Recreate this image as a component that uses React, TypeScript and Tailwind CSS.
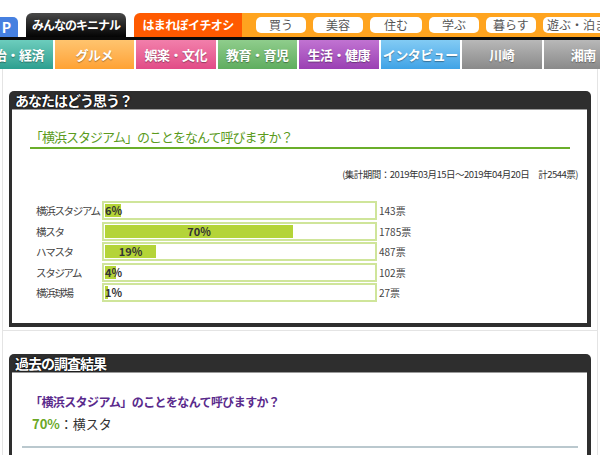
import React from "react";

const pills = [
  { label: "買う", w: "w-[50px]" },
  { label: "美容", w: "w-[50px]" },
  { label: "住む", w: "w-[52px]" },
  { label: "学ぶ", w: "w-[50px]" },
  { label: "暮らす", w: "w-[50px]" },
  { label: "遊ぶ・泊まる", w: "w-[80px]" },
];

const categories = [
  { label: "政治・経済", cls: "from-[#6ccdbd] to-[#2c9f90]" },
  { label: "グルメ", cls: "from-[#ffc46e] to-[#ffa232]" },
  { label: "娯楽・文化", cls: "from-[#f27fab] to-[#e14b87]" },
  { label: "教育・育児", cls: "from-[#8fcd8c] to-[#5fad5f]" },
  { label: "生活・健康", cls: "from-[#c173d2] to-[#9a3fb3]" },
  { label: "インタビュー", cls: "from-[#82cbf4] to-[#3fa3e6]" },
  { label: "川崎", cls: "from-[#b8b8b8] to-[#8a8a8a]" },
  { label: "湘南", cls: "from-[#b8b8b8] to-[#8a8a8a]" },
];

type PollRow = { label: string; pct: number; votes: number };

const rows: PollRow[] = [
  { label: "横浜スタジアム", pct: 6, votes: 143 },
  { label: "横スタ", pct: 70, votes: 1785 },
  { label: "ハマスタ", pct: 19, votes: 487 },
  { label: "スタジアム", pct: 4, votes: 102 },
  { label: "横浜球場", pct: 1, votes: 27 },
];

function Panel({
  title,
  children,
}: {
  title: string;
  children: React.ReactNode;
}) {
  return (
    <div className="ml-[6px] mr-[6px]">
      <div className="h-[18px] bg-[#2e2e2e] rounded-t-[5px] pl-[6px] flex items-center">
        <span className="text-white font-bold text-[14px] leading-[18px] tracking-[-1px] [text-shadow:0_0_2px_#000,0_0_1px_#000]">
          {title}
        </span>
      </div>
      <div className="border-l-[3px] border-r-[4px] border-b-[4px] border-[#2e2e2e] bg-white">
        <div className="border-t border-[#9a9a9a]">{children}</div>
      </div>
    </div>
  );
}

export default function App() {
  return (
    <div className="w-[600px] h-[455px] overflow-hidden bg-white font-['Noto_Sans_CJK_JP',sans-serif] text-[#333]">
      {/* tabs */}
      <div className="flex items-end h-[37px]">
        <div className="ml-[-40px] w-[58px] h-[20px] bg-[#4680e0] rounded-tr-[5px] flex items-center justify-end pr-[3px] text-white font-bold text-[14px] leading-none tracking-[4px]">
          TOP
        </div>
        <div className="ml-[8px] w-[100px] h-[24px] bg-linear-to-b from-[#4a4a4a] to-[#050505] rounded-t-[6px] flex items-center justify-center text-white font-bold text-[12px] tracking-[-1px]">
          みんなのキニナル
        </div>
        <div className="ml-[8px] w-[108px] h-[24px] bg-[#ff5a00] rounded-tl-[6px] flex items-center justify-center text-white font-bold text-[12px] tracking-[-0.6px]">
          はまれぽイチオシ
        </div>
        <div className="flex-1 h-[24px] bg-[#ffa41f] flex items-center gap-[7px] pl-[14px] overflow-hidden">
          {pills.map((p) => (
            <div
              key={p.label}
              className={`${p.w} shrink-0 h-[16px] bg-white rounded-[5px] flex items-center justify-center text-[#555] text-[12px] leading-none whitespace-nowrap`}
            >
              {p.label}
            </div>
          ))}
        </div>
      </div>
      <div className="h-[3px] bg-[#0a0a0a]" />

      {/* categories */}
      <div className="flex gap-[2px] ml-[-27px] h-[29px]">
        {categories.map((c) => (
          <div
            key={c.label}
            className={`w-[79.5px] shrink-0 bg-linear-to-b ${c.cls} flex items-center justify-center text-white font-bold text-[13px] tracking-[-0.5px] whitespace-nowrap [text-shadow:0_1px_1px_rgba(0,0,0,0.35)]`}
          >
            {c.label}
          </div>
        ))}
      </div>

      <div className="ml-[2px] w-[596px] border-x border-[#e4e4e4] pt-[22px] h-[400px]">
        <Panel title="あなたはどう思う？">
          <div className="pt-[19px] pb-[21px]">
            <div className="ml-[18px] mr-[17px] border-b-2 border-[#6aae2a] pb-[2px]">
              <p className="text-[#5b9b1d] text-[13px] leading-[16px] tracking-[-1px]">
                「横浜スタジアム」のことをなんて呼びますか？
              </p>
            </div>
            <p className="mt-[18px] pr-[9px] text-right text-[9.5px] leading-[14px] tracking-[-0.5px] text-[#333]">
              (集計期間：2019年03月15日～2019年04月20日　計2544票)
            </p>
            <div className="mt-[20px] flex flex-col gap-[1.5px] pl-[24px]">
              {rows.map((r) => (
                <div key={r.label} className="flex items-center h-[19px]">
                  <div className="w-[66px] text-[10.5px] leading-[19px] tracking-[-1.3px] whitespace-nowrap text-[#444]">
                    {r.label}
                  </div>
                  <div className="w-[275px] h-[19px] border-2 border-[#cfe59a] p-[1px]">
                    <div
                      className="h-[13px] bg-[#b4d438] text-center whitespace-nowrap text-[11px] leading-[13px] font-bold text-[#333]"
                      style={{ width: `${r.pct}%` }}
                    >
                      {r.pct}%
                    </div>
                  </div>
                  <div className="ml-[2px] text-[10px] leading-[19px] text-[#444]">
                    {r.votes}票
                  </div>
                </div>
              ))}
            </div>
          </div>
        </Panel>

        <div className="mt-[3px] border-t border-[#e4e4e4]" />

        <div className="mt-[23px]">
          <Panel title="過去の調査結果">
            <div className="pt-[21px] h-[100px]">
              <p className="pl-[18px] text-[#5a2a8c] font-bold text-[12px] leading-[16px] tracking-[-0.6px]">
                「横浜スタジアム」のことをなんて呼びますか？
              </p>
              <p className="mt-[6px] pl-[20px] text-[13px] leading-[16px]">
                <span className="text-[#6aa826] font-bold">70%</span>
                <span className="text-[#333]">：横スタ</span>
              </p>
              <div className="mt-[14px] ml-[10px] mr-[9px] border-t-2 border-[#bac8ce]" />
            </div>
          </Panel>
        </div>
      </div>
    </div>
  );
}
